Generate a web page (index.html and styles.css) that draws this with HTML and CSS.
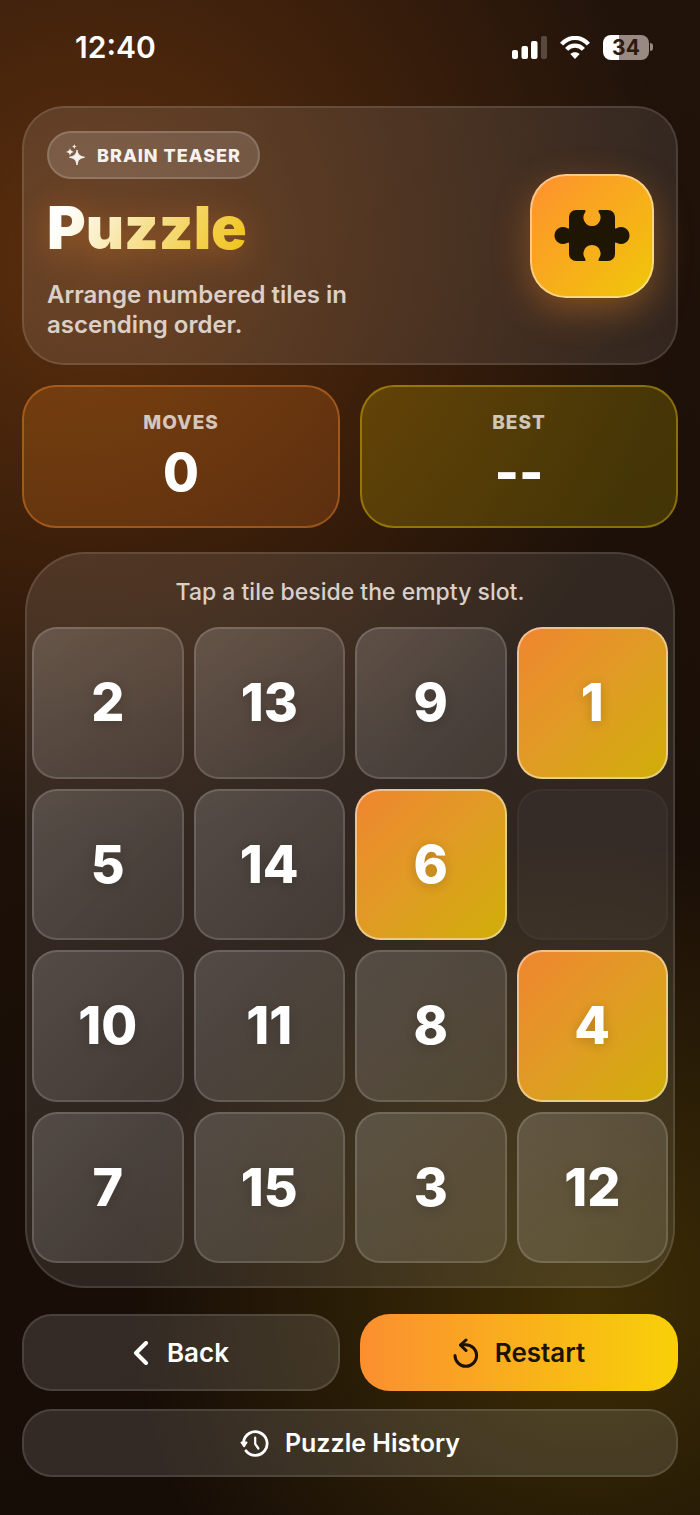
FILE: index.html
```
<!DOCTYPE html>
<html lang="en">
<head>
<meta charset="utf-8">
<meta name="viewport" content="width=device-width, initial-scale=1">
<title>Puzzle</title>
<link rel="stylesheet" href="styles.css">
</head>
<body>

<div class="statusbar">
<span class="clock">12:40</span>
<div class="status-icons">
<svg width="35" height="23" viewBox="0 0 35 23" aria-hidden="true">
<rect x="0" y="14" width="6" height="9" rx="2" fill="#fff"/>
<rect x="9.500" y="10" width="6.500" height="13" rx="2" fill="#fff"/>
<rect x="19" y="5" width="6.500" height="18" rx="2" fill="#fff"/>
<rect x="29" y="0" width="6" height="23" rx="2" fill="#fff" opacity=".22"/>
</svg>
<svg width="30" height="23" viewBox="0 0 30 23" aria-hidden="true">
<g fill="none" stroke="#fff" stroke-width="4.200">
<path d="M1.600 8.200C9-.2 21-.2 28.400 8.200"/>
<path d="M6.600 13.400c4.600-5 12.200-5 16.800 0"/>
</g>
<path d="M15 23l-4.700-5c2.600-2.500 6.800-2.500 9.400 0z" fill="#fff"/>
</svg>
<div class="battery"><span class="battery-level">34</span></div>
</div>
</div>

<main>
<header class="card hero">
<div class="hero-text">
<div class="pill">
<svg width="20" height="22" viewBox="0 0 20 22" fill="currentColor" aria-hidden="true">
<path d="M11 6c.9 4.700 2.200 6 7.500 7.300-5.300 1.200-6.600 2.500-7.500 7.700-.9-5.200-2.200-6.500-7.500-7.700C8.800 12 10.100 10.700 11 6z" stroke="currentColor" stroke-linejoin="round"/>
<path d="M4 4c.5 2.500 1.200 3.200 4 3.900-2.800.6-3.500 1.300-4 4-.5-2.700-1.200-3.400-4-4C2.800 7.200 3.500 6.500 4 4z"/>
<path d="M8.300 0c.3 1.700.8 2.200 2.600 2.600-1.800.4-2.300.9-2.600 2.700-.3-1.800-.8-2.300-2.600-2.700C7.500 2.200 8 1.700 8.300 0z"/>
</svg>
<span>BRAIN TEASER</span>
</div>
<h1 class="title">Puzzle</h1>
<p class="desc">Arrange numbered tiles in ascending order.</p>
</div>
<div class="hero-icon">
<svg width="76" height="51" viewBox="0 0 76 51" aria-hidden="true">
<path fill="#1f1503" d="M22 0H31Q32 1 31 2.500A8.600 8.600 0 1 0 45 2.500Q44 1 45 0H54A7 7 0 0 1 61 7V18Q61 19 63 18A8.500 8.500 0 1 1 63 33Q61 32 61 33.500V44A7 7 0 0 1 54 51H45Q44 50 45 48.500A8.600 8.600 0 1 0 31 48.500Q32 50 31 51H22A7 7 0 0 1 15 44V33.500Q15 32 13 33A8.500 8.500 0 1 1 13 18Q15 19 15 18V7A7 7 0 0 1 22 0Z"/>
</svg>
</div>
</header>

<section class="stats">
<div class="stat stat-moves">
<span class="stat-label">MOVES</span>
<span class="stat-value">0</span>
</div>
<div class="stat stat-best">
<span class="stat-label">BEST</span>
<span class="stat-value">--</span>
</div>
</section>

<section class="card board">
<p class="hint">Tap a tile beside the empty slot.</p>
<div class="grid">
<button class="tile">2</button>
<button class="tile">13</button>
<button class="tile">9</button>
<button class="tile movable">1</button>
<button class="tile">5</button>
<button class="tile">14</button>
<button class="tile movable">6</button>
<div class="slot"></div>
<button class="tile">10</button>
<button class="tile">11</button>
<button class="tile">8</button>
<button class="tile movable">4</button>
<button class="tile">7</button>
<button class="tile">15</button>
<button class="tile">3</button>
<button class="tile">12</button>
</div>
</section>

<nav class="actions">
<button class="btn">
<svg width="16" height="24" viewBox="0 0 16 24" fill="none" stroke="currentColor" stroke-width="4" stroke-linecap="round" stroke-linejoin="round" aria-hidden="true">
<path d="M13 2L3 12l10 10"/>
</svg>
Back
</button>
<button class="btn btn-primary">
<svg width="26" height="30" viewBox="0 0 26 30" fill="none" stroke="currentColor" stroke-width="3" stroke-linecap="round" stroke-linejoin="round" aria-hidden="true">
<path d="M2 17.500A10.800 10.800 0 1 0 12.800 6.700H8"/>
<path d="M13 2L7.500 7.200l5.500 5.300"/>
</svg>
Restart
</button>
<button class="btn btn-wide">
<svg width="29" height="27" viewBox="0 0 29 27" fill="none" stroke="currentColor" stroke-width="2.800" stroke-linecap="round" stroke-linejoin="round" aria-hidden="true">
<path d="M3.600 12A11.800 11.800 0 1 1 6 20.800"/>
<path d="M1.500 12.500h5l-2.400 3.600z" fill="currentColor" stroke-width="2"/>
<path d="M15.200 7.500v6.500l3.200 4.500" stroke-width="2.200"/>
</svg>
Puzzle History
</button>
</nav>
</main>

</body>
</html>
```

FILE: styles.css
```
* { box-sizing: border-box; }

body {
  margin: 0;
  padding: 0 22px 38px;
  min-height: 100vh;
  color: #fff;
  font-family: Inter, "Liberation Sans", sans-serif;
  background:
    radial-gradient(circle 580px at 14% 260px, rgba(255, 122, 20, .27), rgba(255, 122, 20, 0)),
    radial-gradient(circle 460px at 84% 1300px, rgba(255, 210, 0, .17), rgba(255, 210, 0, 0)),
    linear-gradient(160deg, #23140b, #1c1008 45%, #150c06);
}

h1, p { margin: 0; }

button {
  font: inherit;
  color: inherit;
  padding: 0;
  cursor: pointer;
}

/* Status bar */

.statusbar {
  display: flex;
  justify-content: space-between;
  align-items: center;
  height: 106px;
  padding: 0 25px 12px 53px;
}

.clock {
  font-size: 30px;
  font-weight: 600;
}

.status-icons {
  display: flex;
  align-items: center;
  gap: 13px;
}

.battery {
  display: flex;
  align-items: center;
}

.battery-level {
  width: 46px;
  height: 25px;
  border-radius: 8px;
  background: linear-gradient(90deg, #fff 34%, #988a82 34%);
  color: #2e190c;
  font-size: 21px;
  font-weight: 700;
  line-height: 25px;
  text-align: center;
}

.battery::after {
  content: "";
  width: 3px;
  height: 8px;
  margin-left: 1px;
  border-radius: 0 4px 4px 0;
  background: #988a82;
}

/* Cards */

.card {
  border: 2px solid rgba(255, 255, 255, .11);
  background: linear-gradient(135deg, rgba(255, 255, 255, .11), rgba(255, 255, 255, .09)) border-box;
}

.hero {
  display: flex;
  justify-content: space-between;
  align-items: center;
  min-height: 259px;
  padding: 22px 22px 22px 23px;
  border-radius: 42px;
}

.hero-text { max-width: 340px; }

.pill {
  display: flex;
  align-items: center;
  gap: 11px;
  width: max-content;
  height: 48px;
  padding: 0 17px;
  border: 2px solid rgba(255, 255, 255, .16);
  border-radius: 24px;
  background: rgba(255, 255, 255, .15);
  color: #f8f2ee;
  font-size: 18px;
  font-weight: 800;
  letter-spacing: 1px;
}

.title {
  width: max-content;
  margin-top: 14px;
  font-size: 59px;
  font-weight: 900;
  line-height: 70px;
  color: transparent;
  background: linear-gradient(120deg, #fff 12%, #f6df8f 50%, #f0c419 96%);
  -webkit-background-clip: text;
  background-clip: text;
  filter: drop-shadow(0 6px 16px rgba(255, 140, 40, .35));
}

.desc {
  margin-top: 17px;
  color: #dccfc7;
  font-size: 24px;
  font-weight: 600;
  line-height: 30px;
}

.hero-icon {
  display: flex;
  align-items: center;
  justify-content: center;
  width: 124px;
  height: 124px;
  border: 2px solid rgba(255, 255, 255, .45);
  border-radius: 36px;
  background: linear-gradient(135deg, #ff9030, #f0c808) border-box;
  box-shadow: 0 12px 36px rgba(255, 140, 40, .36);
}

/* Counters */

.stats {
  display: grid;
  grid-template-columns: 1fr 1fr;
  gap: 20px;
  margin-top: 20px;
}

.stat {
  display: flex;
  flex-direction: column;
  align-items: center;
  height: 143px;
  padding-top: 24px;
  border: 2px solid;
  border-radius: 34px;
}

.stat-moves {
  border-color: rgba(255, 144, 48, .38);
  background: linear-gradient(135deg, rgba(255, 144, 30, .21), rgba(255, 126, 40, .2)) border-box;
}

.stat-best {
  border-color: rgba(240, 200, 10, .4);
  background: linear-gradient(135deg, rgba(235, 195, 0, .22), rgba(225, 200, 0, .2)) border-box;
}

.stat-label {
  color: rgba(255, 255, 255, .72);
  font-size: 19px;
  font-weight: 800;
  letter-spacing: 1px;
  line-height: 24px;
}

.stat-value,
.tile {
  font-size: 52px;
  font-weight: 800;
}

.stat-value {
  margin-top: 8px;
  line-height: 60px;
}

/* Board */

.board {
  margin: 24px 3px 0;
  padding: 22px 5px 23px;
  border-radius: 60px;
}

.hint {
  color: #d8d0cb;
  font-size: 23px;
  font-weight: 500;
  line-height: 33px;
  text-align: center;
}

.grid {
  display: grid;
  grid-template-columns: repeat(4, 1fr);
  gap: 10px;
  margin-top: 18px;
}

.tile,
.slot {
  aspect-ratio: 1;
  border: 2px solid rgba(255, 255, 255, .14);
  border-radius: 25px;
}

.tile {
  background: linear-gradient(135deg, rgba(255, 255, 255, .17), rgba(255, 255, 255, .09)) border-box;
  text-shadow: 0 2px 12px rgba(0, 0, 0, .18);
}

.movable {
  border-color: rgba(255, 255, 255, .45);
  background: linear-gradient(135deg, #f08530, #e09c24 50%, #d0ae08) border-box;
}

.slot {
  border-color: rgba(255, 255, 255, .03);
  background: rgba(255, 255, 255, .03);
}

/* Actions */

.actions {
  display: grid;
  grid-template-columns: 1fr 1fr;
  gap: 18px 20px;
  margin-top: 26px;
}

.btn {
  display: flex;
  align-items: center;
  justify-content: center;
  gap: 18px;
  height: 77px;
  border: 2px solid rgba(255, 255, 255, .11);
  border-radius: 30px;
  background: rgba(255, 255, 255, .12) border-box;
  font-size: 26px;
  font-weight: 600;
}

.btn-primary {
  gap: 16px;
  border: 0;
  background: linear-gradient(90deg, #fb8f30, #f8d008);
  color: #1c1204;
}

.btn-wide {
  grid-column: 1 / -1;
  gap: 16px;
  height: 68px;
  font-size: 25px;
}
```
